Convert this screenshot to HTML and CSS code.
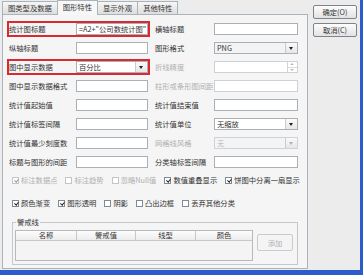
FILE: index.html
```html
<!DOCTYPE html>
<html lang="zh">
<head>
  <meta charset="UTF-8">
  <title>统计图属性</title>
  <link rel="stylesheet" href="styles.css">
</head>
<body>
  <div class="dialog">
    <div class="main">

      <!-- Tabs -->
      <div class="tabbox">
        <ul class="tabs">
          <li>图类型及数据</li>
          <li class="active">图形特性</li>
          <li>显示外观</li>
          <li>其他特性</li>
        </ul>

        <div class="panel">
          <div class="fields">
            <div class="field mark"><label>统计图标题</label><span class="input">=A2+"公司数统计图"</span></div>
            <div class="field"><label>横轴标题</label><span class="input"></span></div>

            <div class="field"><label>纵轴标题</label><span class="input"></span></div>
            <div class="field"><label>图形格式</label><span class="select"><span class="value">PNG</span><span class="arrow"></span></span></div>

            <div class="field mark"><label>图中显示数据</label><span class="select white"><span class="value">百分比</span><span class="arrow"></span></span></div>
            <div class="field off"><label>折线精度</label><span class="input spinbox"><span class="value"></span><span class="spin"><i class="up"></i><i class="down"></i></span></span></div>

            <div class="field"><label>图中显示数据格式</label><span class="input"></span></div>
            <div class="field off"><label>柱形或条形图间距</label><span class="input"></span></div>

            <div class="field"><label>统计值起始值</label><span class="input"></span></div>
            <div class="field"><label>统计值结束值</label><span class="input"></span></div>

            <div class="field"><label>统计值标签间隔</label><span class="input"></span></div>
            <div class="field"><label>统计值单位</label><span class="select white"><span class="value">无缩放</span><span class="arrow"></span></span></div>

            <div class="field"><label>统计值最少刻度数</label><span class="input"></span></div>
            <div class="field off"><label>网格线风格</label><span class="select"><span class="value">无</span><span class="arrow"></span></span></div>

            <div class="field"><label>标题与图形的间距</label><span class="input"></span></div>
            <div class="field"><label>分类轴标签间隔</label><span class="input"></span></div>
          </div>

          <!-- Check options -->
          <div class="checks first">
            <span class="check off on"><span class="box"></span>标注数据点</span>
            <span class="check off"><span class="box"></span>标注趋势</span>
            <span class="check off"><span class="box"></span>忽略Null值</span>
            <span class="check on"><span class="box"></span>数值重叠显示</span>
            <span class="check on"><span class="box"></span>饼图中分离一扇显示</span>
          </div>
          <div class="checks">
            <span class="check on"><span class="box"></span>颜色渐变</span>
            <span class="check on"><span class="box"></span>图形透明</span>
            <span class="check"><span class="box"></span>阴影</span>
            <span class="check"><span class="box"></span>凸出边框</span>
            <span class="check"><span class="box"></span>丢弃其他分类</span>
          </div>

          <!-- Warning lines -->
          <fieldset class="warn">
            <legend>警戒线</legend>
            <div class="warn-body">
              <div class="table">
                <div class="thead">
                  <span>名称</span><span>警戒值</span><span>线型</span><span>颜色</span>
                </div>
              </div>
              <button class="add" disabled>添加</button>
            </div>
          </fieldset>
        </div>
      </div>

      <!-- Dialog buttons -->
      <div class="side">
        <button>确定(O)</button>
        <button>取消(C)</button>
      </div>
    </div>
  </div>
</body>
</html>
```

FILE: styles.css
```css
body { margin: 0; width: 363px; height: 275px; overflow: hidden; background: #ececec; font-family: "Noto Sans CJK SC", "Liberation Sans", sans-serif; font-size: 7.3px; color: #333; }
.dialog { height: 275px; box-sizing: border-box; border-right: 3px solid #2c5ccc; border-bottom: 5px solid #2c5ccc; }
.main { display: flex; height: 270px; }

/* tabs */
.tabbox { margin-left: 2px; width: 306px; display: flex; flex-direction: column; }
.tabs { list-style: none; margin: 0; padding: 0; display: flex; height: 14px; }
.tabs li { box-sizing: border-box; height: 13px; margin-top: 1px; padding: 0 5px; border: 1px solid #aab2ba; border-bottom: none; margin-right: -1px; background: linear-gradient(#f6f6f6, #dedede); line-height: 12px; white-space: nowrap; }
.tabs li.active { height: 15px; margin-top: 0; background: #f7f7f7; position: relative; z-index: 1; }

.panel { flex: 1; margin-bottom: 1px; border: 1px solid #aab2ba; background: #f5f5f5; padding: 8px 9px 0 6px; }

/* form fields */
.fields { display: grid; grid-template-columns: 139px 143px; column-gap: 7px; row-gap: 7px; }
.field { display: flex; align-items: center; height: 12px; }
.field label { width: 67px; flex: none; white-space: nowrap; overflow: hidden; }
.field:nth-child(even) label { width: 59px; }
.field.mark { outline: 2px solid #d92a30; }
.field.off label { color: #b0b0b0; }

.input, .select { flex: 1; display: flex; align-items: center; height: 12px; box-sizing: border-box; border: 1px solid #a9b0b8; background: #fff; padding-left: 2px; line-height: 10px; white-space: nowrap; overflow: hidden; }
.select { background: #f3f3f3; padding-right: 0; }
.select.white { background: #fff; }
.value { flex: 1; }
.arrow { width: 11px; height: 10px; border-left: 1px solid #c8ccd0; background: linear-gradient(#fafafa, #e6e6e6); position: relative; }
.arrow::after { content: ""; position: absolute; left: 3px; top: 4px; border-left: 2.5px solid transparent; border-right: 2.5px solid transparent; border-top: 3px solid #222; }
.off .input, .off .select { border-color: #ccd2d8; }
.off .select { background: #f4f4f4; color: #b8b8b8; }
.off .arrow::after { border-top-color: #b0b0b0; }
.spinbox { padding-right: 0; }
.spin { width: 9px; height: 10px; display: flex; flex-direction: column; border-left: 1px solid #d0d4d8; }
.spin i { flex: 1; position: relative; border-bottom: 1px solid #d8dce0; }
.spin i.up::after { content: ""; position: absolute; left: 2px; top: 1px; border-left: 2px solid transparent; border-right: 2px solid transparent; border-bottom: 2px solid #bbb; }
.spin i.down { border-bottom: none; }
.spin i.down::after { content: ""; position: absolute; left: 2px; top: 1px; border-left: 2px solid transparent; border-right: 2px solid transparent; border-top: 2px solid #bbb; }

/* check boxes */
.checks { display: flex; gap: 8px; padding-left: 3px; height: 10px; align-items: center; margin-top: 13px; white-space: nowrap; }
.checks.first { margin-top: 7px; }
.check { display: flex; align-items: center; }
.check .box { width: 7px; height: 7px; box-sizing: border-box; border: 1px solid #7f8a96; background: #fff; margin-right: 2px; position: relative; }
.check.on .box::after { content: ""; position: absolute; left: 1.5px; top: 0; width: 1.5px; height: 3px; border: solid #222; border-width: 0 1px 1px 0; transform: rotate(40deg); }
.check.off { color: #b0b0b0; }
.check.off .box { border-color: #c0c6cc; }
.check.off.on .box::after { border-color: #999; }

/* warning line group */
.warn { margin: 9px 0 0 3px; padding: 0 3px 3px 2px; border: 1px solid #c4c8cc; }
.warn legend { padding: 0 1px; margin-left: 1px; line-height: 10px; }
.warn-body { display: flex; align-items: flex-start; gap: 4px; padding-top: 3px; }
.table { width: 238px; height: 31px; box-sizing: border-box; border: 1px solid #b4bac0; background: #f4f4f4; }
.thead { display: grid; grid-template-columns: 61px 59px 60px 1fr; height: 9px; border-bottom: 1px solid #c4c8cc; background: linear-gradient(#fdfdfd, #ececec); }
.thead span { text-align: center; line-height: 9px; border-right: 1px solid #c4c8cc; }
.thead span:last-child { border-right: none; }
.add { margin-top: 4px; width: 36px; height: 17px; font: inherit; color: #b0b0b0; border: 1px solid #c8ccd0; border-radius: 2px; background: #f4f4f4; padding: 0; }

/* side buttons */
.side { width: 52px; box-sizing: border-box; padding: 5px 0 0 5px; display: flex; flex-direction: column; gap: 4px; }
.side button { width: 44px; height: 14px; padding: 0; font: inherit; color: #333; border: 1px solid #7d848c; border-radius: 2px; background: linear-gradient(#fdfdfd, #e2e2e2); }
```
